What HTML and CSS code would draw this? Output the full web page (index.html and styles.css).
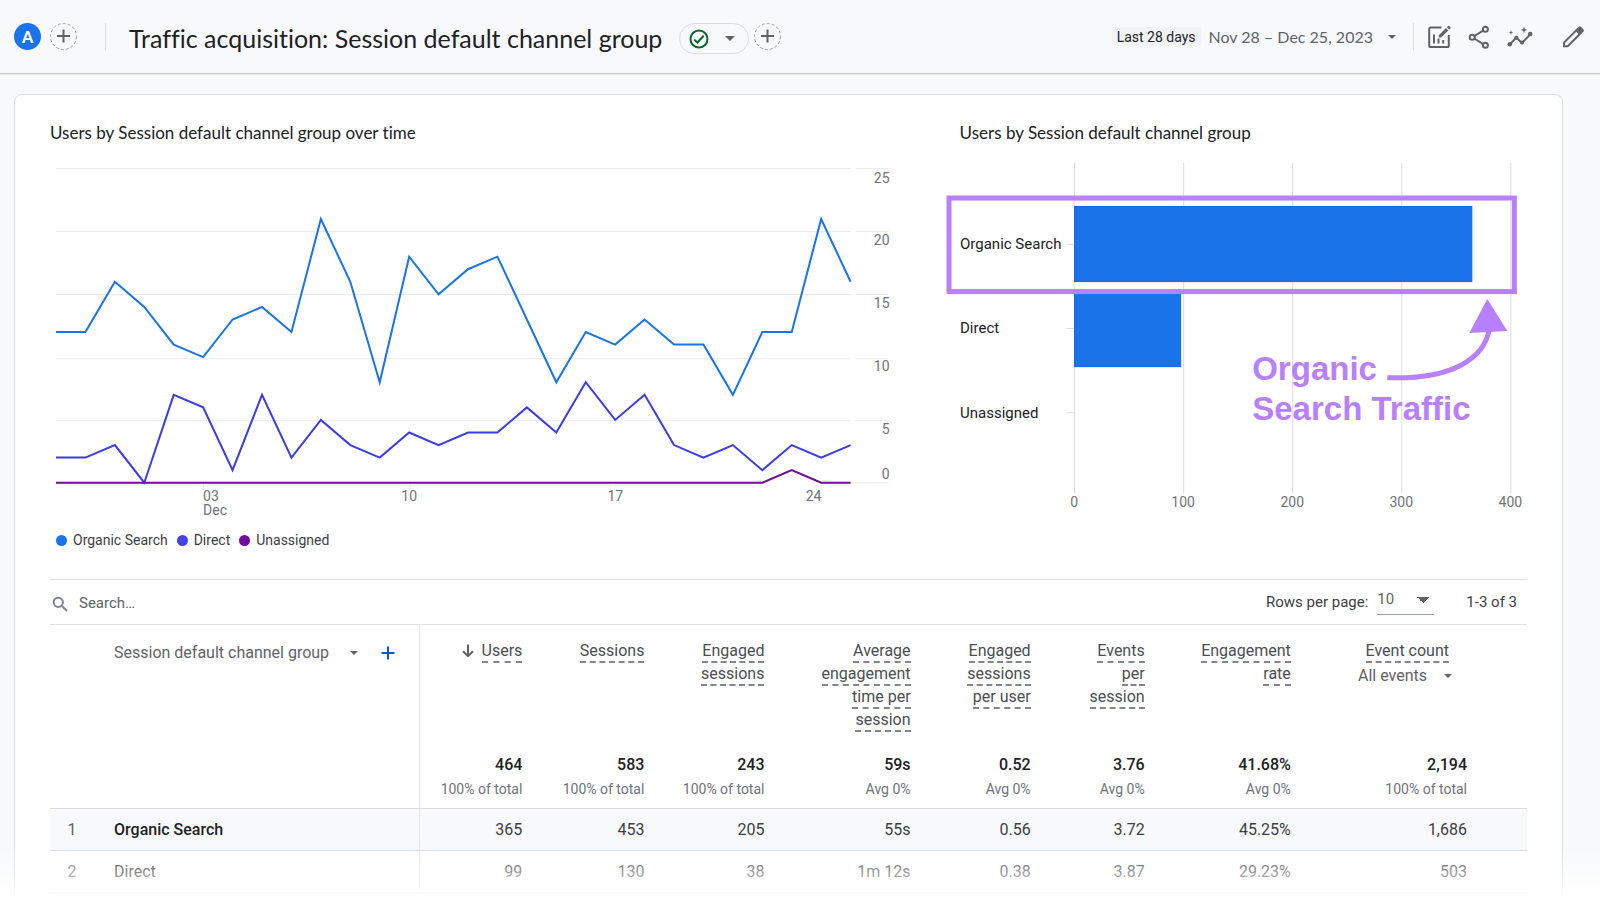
FILE: index.html
```html
<!DOCTYPE html>
<html lang="en">
<head>
<meta charset="utf-8">
<title>Traffic acquisition: Session default channel group</title>
<link rel="stylesheet" href="styles.css">
</head>
<body>
<header class="topbar">
  <button class="avatar" aria-label="All users segment">A</button>
  <button class="add-circle" aria-label="Add comparison"><svg viewBox="0 0 27 27" width="27" height="27"><circle class="dash" cx="13.5" cy="13.5" r="13"/><path class="plus" d="M7 13H20M13.500 6.500V19.500"/></svg></button>
  <span class="divider divider-left"></span>
  <h1 class="report-title">Traffic acquisition: Session default channel group</h1>
  <button class="status-pill" aria-label="Data quality">
    <svg viewBox="0 0 20 20" width="20" height="20"><circle cx="10" cy="10" r="8.500"/><path d="M5.300 10.600L8.300 13.500L14.700 6.800"/></svg>
    <span class="caret caret-mid"></span>
  </button>
  <button class="add-circle" aria-label="Add filter"><svg viewBox="0 0 27 27" width="27" height="27"><circle class="dash" cx="13.5" cy="13.5" r="13"/><path class="plus" d="M7 13H20M13.500 6.500V19.500"/></svg></button>
  <div class="top-right">
    <button class="date-range"><span class="chip">Last 28 days</span><span class="dates">Nov 28 – Dec 25, 2023</span><span class="caret"></span></button>
    <span class="divider"></span>
    <div class="actions">
      <button aria-label="Customize report"><svg viewBox="0 0 24 24" width="24" height="24"><path class="ln" d="M14.500 2.500H3.800Q2.200 2.500 2.200 4.100V20.400Q2.200 22 3.800 22H20.200Q21.800 22 21.800 20.400V10"/><path class="ln" d="M7 9.500V18.500M11.500 13.500V18.500M16.200 15V18.500"/><path d="M11.800 10.300L19 3.100L21.300 5.400L14.100 12.600H11.800ZM19.900 2.200L21.200.9Q21.700.5 22.200.9L23.500 2.200Q23.900 2.700 23.500 3.200L22.200 4.500Z"/></svg></button>
      <button aria-label="Share"><svg viewBox="0 0 24 24" width="24" height="24"><path class="ln" d="M7.400 11L15.700 5.800M7.400 13.500L15.700 18.800"/><circle class="ln" cx="5.200" cy="12.300" r="2.500"/><circle class="ln" cx="18.400" cy="4.300" r="2.500"/><circle class="ln" cx="18.400" cy="20.300" r="2.500"/></svg></button>
      <button aria-label="Insights"><svg viewBox="0 0 26 24" width="26" height="24"><path class="ln" d="M2.800 19.500L9.300 12.600L15 18L23.600 9"/><circle cx="2.800" cy="19.300" r="2.300"/><circle cx="9.300" cy="12.800" r="2"/><circle cx="15" cy="17.500" r="2"/><circle cx="23.200" cy="9" r="2.300"/><path d="M17 1.500L17.900 4L20.400 4.900L17.900 5.800L17 8.300L16.100 5.800L13.600 4.900L16.100 4ZM4 5L4.600 6.900L6.500 7.500L4.600 8.100L4 10L3.400 8.100L1.500 7.500L3.400 6.900Z"/></svg></button>
      <button class="edit" aria-label="Edit"><svg viewBox="0 0 24 24" width="24" height="24"><path class="ln" d="M3 21.300V17.600L15.300 5.300L19 9L6.700 21.300Z"/><path d="M15 4.300L17.600 1.700Q18.700.8 19.800 1.700L22.500 4.400Q23.400 5.500 22.500 6.600L19.900 9.200Z"/></svg></button>
    </div>
  </div>
</header>

<main class="card">
  <div class="charts">
    <section>
      <h2 class="chart-title">Users by Session default channel group over time</h2>
      <svg class="chart" viewBox="0 0 909 375" role="img" aria-label="Users over time">
        <path class="grid" d="M6 23.500H800M805 23.500H838M6 86.500H800M805 86.500H838M6 149.500H800M805 149.500H838M6 213.500H800M805 213.500H838M6 275.500H800M805 275.500H838M805 337.500H838M153.500 338V345M359.500 338V345M564.500 338V345M770.500 338V345"/>
        <g class="series" transform="translate(6 337.5) scale(29.41 -12.55)">
          <polyline class="s-organic" points="0,12 1,12 2,16 3,14 4,11 5,10 6,13 7,14 8,12 9,21 10,16 11,8 12,18 13,15 14,17 15,18 16,13 17,8 18,12 19,11 20,13 21,11 22,11 23,7 24,12 25,12 26,21 27,16"/>
          <polyline class="s-direct" points="0,2 1,2 2,3 3,0 4,7 5,6 6,1 7,7 8,2 9,5 10,3 11,2 12,4 13,3 14,4 15,4 16,6 17,4 18,8 19,5 20,7 21,3 22,2 23,3 24,1 25,3 26,2 27,3"/>
          <polyline class="s-unassigned" points="0,0 24,0 25,1 26,0 27,0"/>
        </g>
        <g class="axis end">
          <text x="839" y="38">25</text><text x="839" y="100">20</text><text x="839" y="163">15</text><text x="839" y="226">10</text><text x="839" y="289">5</text><text x="839" y="334">0</text>
          <text x="771" y="356">24</text>
        </g>
        <g class="axis"><text x="153" y="356">03</text><text x="153" y="370">Dec</text></g>
        <g class="axis mid"><text x="359" y="356">10</text><text x="565" y="356">17</text></g>
      </svg>
      <ul class="legend">
        <li><i class="dot dot-organic"></i>Organic Search</li>
        <li><i class="dot dot-direct"></i>Direct</li>
        <li><i class="dot dot-unassigned"></i>Unassigned</li>
      </ul>
    </section>
    <section>
      <h2 class="chart-title">Users by Session default channel group</h2>
      <svg class="chart" viewBox="0 0 567 375" role="img" aria-label="Users by channel group">
        <path class="grid-v" d="M114.500 18V348M223.500 18V348M332.500 18V348M441.500 18V348M550.500 18V348M107 99.500H114M107 183.500H114M107 267.500H114"/>
        <rect class="bar" x="114.500" y="61.500" width="397" height="75"/>
        <rect class="bar" x="114.500" y="145.500" width="106" height="76"/>
        <g class="cat"><text x="0" y="104">Organic Search</text><text x="0" y="188">Direct</text><text x="0" y="273">Unassigned</text></g>
        <g class="axis mid"><text x="114" y="362">0</text><text x="223" y="362">100</text><text x="332" y="362">200</text><text x="441" y="362">300</text><text x="550" y="362">400</text></g>
        <rect class="mark" x="-11" y="53" width="565" height="93.500"/>
        <path class="arrow" d="M427 232.500C492 235 524 213 529 184"/>
        <path class="arrow-head" d="M527 154L547 186L509 188Z"/>
        <g class="note"><text x="292" y="235">Organic</text><text x="292" y="275">Search Traffic</text></g>
      </svg>
    </section>
  </div>

  <div class="toolbar">
    <label class="search">
      <svg viewBox="0 0 16 16" width="16" height="16"><circle cx="6.300" cy="6.300" r="4.600"/><path d="M9.700 9.700L15 15"/></svg>
      <input type="text" placeholder="Search…" aria-label="Search">
    </label>
    <div class="pager">
      <label for="rows">Rows per page:</label>
      <span class="select-wrap"><select id="rows"><option>10</option><option>25</option><option>50</option></select></span>
      <span class="range">1-3 of 3</span>
    </div>
  </div>

  <table class="report">
    <colgroup><col class="c-num"><col class="c-name"><col class="c-122"><col class="c-122"><col class="c-120"><col class="c-146"><col class="c-120"><col class="c-114"><col class="c-146"><col class="c-last"></colgroup>
    <thead>
      <tr>
        <th colspan="2" class="dim"><div class="dim-head"><button class="dim-pick">Session default channel group<span class="caret"></span></button><button class="dim-add" aria-label="Add dimension"><svg viewBox="0 0 14 14" width="14" height="14"><path d="M7 .5V13.500M.5 7H13.500"/></svg></button></div></th>
        <th><svg class="sort" viewBox="0 0 12 14" width="12" height="14"><path d="M6 .5V12M1 7.200L6 12.200L11 7.200"/></svg><span class="m">Users</span></th>
        <th><span class="m">Sessions</span></th>
        <th><span class="m">Engaged<br>sessions</span></th>
        <th><span class="m">Average<br>engagement<br>time per<br>session</span></th>
        <th><span class="m">Engaged<br>sessions<br>per user</span></th>
        <th><span class="m">Events<br>per<br>session</span></th>
        <th><span class="m">Engagement<br>rate</span></th>
        <th class="last"><span class="m">Event count</span><button class="event-pick">All events<span class="caret"></span></button></th>
      </tr>
      <tr class="totals">
        <td colspan="2" class="dim"></td>
        <td><b>464</b><small>100% of total</small></td>
        <td><b>583</b><small>100% of total</small></td>
        <td><b>243</b><small>100% of total</small></td>
        <td><b>59s</b><small>Avg 0%</small></td>
        <td><b>0.52</b><small>Avg 0%</small></td>
        <td><b>3.76</b><small>Avg 0%</small></td>
        <td><b>41.68%</b><small>Avg 0%</small></td>
        <td class="last"><b>2,194</b><small>100% of total</small></td>
      </tr>
    </thead>
    <tbody>
      <tr class="hover"><td class="num">1</td><td class="name">Organic Search</td><td>365</td><td>453</td><td>205</td><td>55s</td><td>0.56</td><td>3.72</td><td>45.25%</td><td class="last">1,686</td></tr>
      <tr><td class="num">2</td><td class="name">Direct</td><td>99</td><td>130</td><td>38</td><td>1m 12s</td><td>0.38</td><td>3.87</td><td>29.23%</td><td class="last">503</td></tr>
      <tr><td class="num"></td><td class="name"></td><td></td><td></td><td></td><td></td><td></td><td></td><td></td><td class="last"></td></tr>
    </tbody>
  </table>
</main>
<div class="fade"></div>
</body>
</html>
```

FILE: styles.css
```css
* { box-sizing: border-box; }
body {
  margin: 0;
  height: 100vh;
  overflow: hidden;
  background: #f8f9fb;
  color: #202124;
  font-family: Roboto, "Liberation Sans", sans-serif;
  font-size: 16px;
}
button {
  margin: 0;
  padding: 0;
  border: 0;
  background: none;
  color: inherit;
  font: inherit;
  cursor: pointer;
}
svg { display: block; fill: none; }

.topbar {
  display: flex;
  align-items: center;
  height: 74px;
  padding: 0 15px 0 14px;
  border-bottom: 1px solid #c6c8ca;
  box-shadow: 0 1px 1px #e8eaed;
}
.avatar {
  width: 27px;
  height: 27px;
  border-radius: 50%;
  background: #1a73e8;
  color: #fff;
  font-family: Lato, sans-serif;
  font-size: 16px;
  font-weight: 900;
  line-height: 27px;
}
.add-circle { margin-left: 9px; }
.dash { stroke: #9aa0a6; stroke-dasharray: 3 2; }
.plus { stroke: #5f6368; stroke-width: 2; }
.divider { width: 1px; height: 27px; background: #dadce0; }
.divider-left { margin: 0 23px 0 28px; }
.report-title {
  margin: 0;
  padding-top: 2px;
  font-family: Lato, sans-serif;
  font-size: 25px;
  font-weight: 400;
  font-variant-ligatures: none;
  line-height: 32px;
  white-space: nowrap;
}
.status-pill {
  display: flex;
  align-items: center;
  gap: 16px;
  height: 31px;
  margin: 4px -4px 0 17px;
  padding: 0 13px 0 9px;
  border: 1px solid #dadce0;
  border-radius: 16px;
}
.status-pill svg { stroke: #0d652d; stroke-width: 2; }
.caret {
  display: inline-block;
  border: 4px solid transparent;
  border-top-color: #5f6368;
  border-bottom: 0;
}
.caret-mid { border-width: 5px 5px 0; }
.top-right {
  display: flex;
  align-items: center;
  margin-left: auto;
}
.date-range {
  display: flex;
  align-items: center;
  margin-right: 17px;
  color: #5f6368;
}
.chip {
  margin-right: 8px;
  padding: 1px 5px 0;
  border-radius: 2px;
  background: #f1f3f4;
  color: #202124;
  font-size: 14px;
  line-height: 18px;
}
.dates {
  margin-right: 15px;
  font-family: Lato, sans-serif;
  font-size: 16px;
  line-height: 20px;
}
.actions {
  display: flex;
  gap: 16px;
  margin-left: 13px;
}
.actions .edit { margin-left: 12px; }
.actions svg { fill: #5f6368; }
.actions .ln { fill: none; stroke: #5f6368; stroke-width: 2; }

.card {
  margin: 20px 37px 0 14px;
  padding: 26px 35px 0;
  border: 1px solid #dadce0;
  border-radius: 8px;
  background: #fff;
}
.charts { display: grid; grid-template-columns: 909fr 567fr; }
.chart-title {
  margin: 0;
  font-family: Lato, sans-serif;
  font-size: 17px;
  font-weight: 400;
  font-variant-ligatures: none;
  line-height: 24px;
}
.chart { width: 100%; height: auto; overflow: visible; }
.grid { stroke: #e8eaed; }
.grid-v { stroke: #dadce0; }
.series polyline {
  stroke-width: 2px;
  vector-effect: non-scaling-stroke;
}
.s-organic { stroke: #1a73e8; }
.s-direct { stroke: #3b3be8; }
.s-unassigned { stroke: #6a0f96; }
.axis text { fill: #6f7378; font-size: 14px; }
.end text { text-anchor: end; }
.mid text { text-anchor: middle; }
.cat text { fill: #202124; font-size: 15px; }
.bar { fill: #1a73e8; stroke: #0f67e0; }
.mark { stroke: #b780ff; stroke-width: 5px; }
.arrow { stroke: #b780ff; stroke-width: 5px; }
.arrow-head { fill: #b780ff; }
.note text {
  fill: #b780ff;
  font-family: "Liberation Sans", Arial, sans-serif;
  font-size: 33px;
  font-weight: 700;
}
.legend {
  display: flex;
  gap: 9px;
  margin: 10px 0 29px;
  padding: 0 0 0 6px;
  list-style: none;
  color: #3c4043;
  font-size: 14px;
  line-height: 20px;
}
.legend li { display: flex; align-items: center; gap: 6px; }
.dot { width: 11px; height: 11px; border-radius: 50%; }
.dot-organic { background: #1a73e8; }
.dot-direct { background: #4343e8; }
.dot-unassigned { background: #6f0a9c; }

.toolbar {
  display: flex;
  align-items: center;
  justify-content: space-between;
  height: 46px;
  border: solid #dfe1e5;
  border-width: 1px 0;
  font-size: 15px;
}
.search { display: flex; align-items: center; gap: 11px; padding: 2px 0 0 2px; }
.search svg { margin-top: 2px; stroke: #80868b; stroke-width: 2; }
.search input {
  width: 240px;
  padding: 0;
  border: 0;
  outline: 0;
  background: none;
  font: inherit;
}
.search input::placeholder { color: #5f6368; opacity: 1; }
.pager { display: flex; align-items: center; padding-right: 10px; color: #3c4043; }
.select-wrap {
  display: flex;
  width: 57px;
  margin: 0 32px 0 9px;
  border-bottom: 1px solid #9aa0a6;
}
.select-wrap select {
  width: 100%;
  height: 24px;
  padding: 0 0 6px;
  border: 0;
  outline: 0;
  appearance: none;
  background: linear-gradient(to bottom right, #5f6368 50%, transparent 50%) 46px 7px / 6px 6px no-repeat, linear-gradient(to bottom left, #5f6368 50%, transparent 50%) 40px 7px / 6px 6px no-repeat;
  color: #5f6368;
  font: inherit;
}

.report {
  width: 100%;
  border-collapse: separate;
  border-spacing: 0;
  table-layout: fixed;
  color: #3c4043;
}
.c-num { width: 64px; }
.c-name { width: 306px; }
.c-122 { width: 122px; }
.c-146 { width: 146px; }
.c-120 { width: 120px; }
.c-114 { width: 114px; }
.c-last { width: 216px; }
.report th, .report td { padding: 0 20px 0 0; text-align: right; font-weight: 400; }
.report th { padding-top: 14px; padding-bottom: 21px; line-height: 23px; vertical-align: top; white-space: nowrap; color: #4a4e52; }
.report .dim, .report .name { padding-left: 0; border-right: 1px solid #e4e6e9; text-align: left; }
.report td.last { padding-right: 60px; }
.report th.last { padding-right: 75px; }
.m { padding-bottom: 1px; border-bottom: 2px dashed #80868b; }
.last .m { margin-right: 3px; }
.sort { display: inline-block; margin-right: 8px; vertical-align: -2px; stroke: #5f6368; stroke-width: 2; }
.dim-head { display: flex; align-items: center; padding: 2px 0 0 64px; color: #5f6368; }
.dim-pick .caret { margin: 0 0 3px 21px; }
.dim-add { margin-left: 23px; }
.dim-add svg { stroke: #0b57d0; stroke-width: 2; }
.event-pick { display: block; margin: 2px 0 0 auto; color: #5f6368; }
.event-pick .caret { margin: 0 0 3px 17px; }
.totals td { padding-bottom: 6px; border-bottom: 1px solid #dadce0; vertical-align: top; }
.totals b {
  display: block;
  color: #202124;
  font-weight: 500;
  line-height: 25px;
}
.totals small { display: block; color: #6f7378; font-size: 14px; line-height: 25px; white-space: nowrap; }
.report tbody td { height: 42px; border-bottom: 1px solid #dadce0; }
.report tbody .num { padding: 0 20px 0 0; text-align: center; color: #5f6368; }
.report tbody .name { color: #202124; }
.hover td { background: #f8f9fb; }
.report .hover .name { font-weight: 500; }

.fade {
  position: fixed;
  right: 0;
  bottom: 0;
  left: 0;
  height: 66px;
  background: linear-gradient(rgba(255, 255, 255, 0), #fff 90%);
  pointer-events: none;
}
```
